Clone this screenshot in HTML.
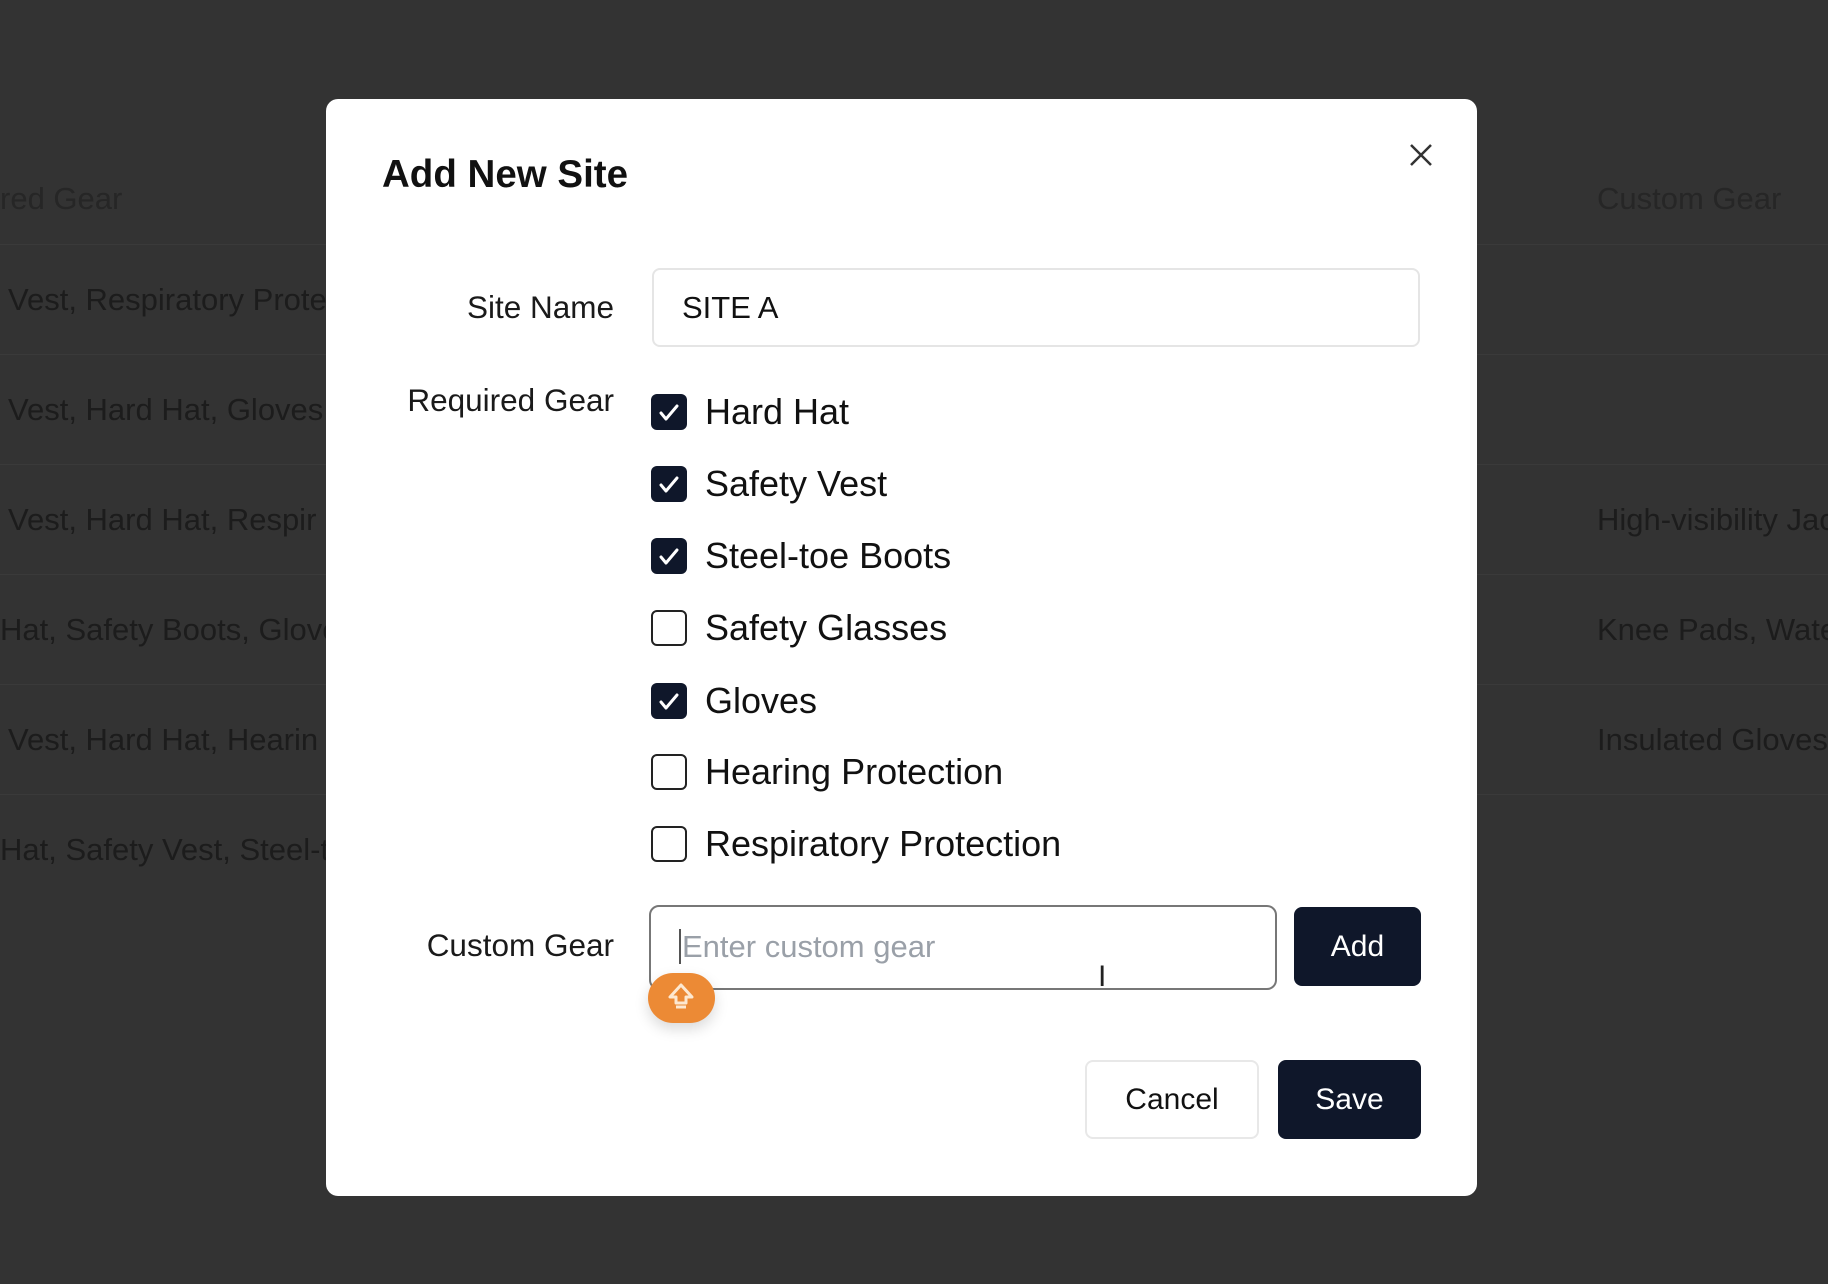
<!DOCTYPE html>
<html><head><meta charset="utf-8"><style>
*{box-sizing:border-box;margin:0;padding:0}
body{width:1828px;height:1284px;background:#333333;font-family:"Liberation Sans",sans-serif;position:relative;overflow:hidden}
.bg{position:absolute;color:#1c1c1c;font-size:31px;white-space:nowrap}
.line{position:absolute;height:1px;background:#3a3a3a;left:0;right:0}
.modal{position:absolute;left:326px;top:99px;width:1151px;height:1097px;background:#fff;border-radius:12px}
.a{position:absolute;white-space:nowrap}
.cb{position:absolute;left:651px;width:36px;height:36px;border-radius:6px}
.on{background:#0f172a}
.off{border:2.5px solid #222;background:#fff}
.gl{position:absolute;left:705px;font-size:36px;color:#111;white-space:nowrap}
.lb{position:absolute;left:0;width:614px;text-align:right;font-size:31.5px;color:#1a1a1a}
</style></head><body>
<div class="bg" style="left:0;top:181px;color:#262626">red Gear</div>
<div class="bg" style="left:1597px;top:181px;color:#262626">Custom Gear</div>
<div class="line" style="top:244px"></div>
<div class="bg" style="left:8px;top:282px">Vest, Respiratory Prote</div>
<div class="line" style="top:354px"></div>
<div class="bg" style="left:8px;top:392px">Vest, Hard Hat, Gloves</div>
<div class="line" style="top:464px"></div>
<div class="bg" style="left:8px;top:502px">Vest, Hard Hat, Respir</div>
<div class="bg" style="left:1597px;top:502px">High-visibility Jac</div>
<div class="line" style="top:574px"></div>
<div class="bg" style="left:0;top:612px">Hat, Safety Boots, Glove</div>
<div class="bg" style="left:1597px;top:612px">Knee Pads, Wate</div>
<div class="line" style="top:684px"></div>
<div class="bg" style="left:8px;top:722px">Vest, Hard Hat, Hearin</div>
<div class="bg" style="left:1597px;top:722px">Insulated Gloves</div>
<div class="line" style="top:794px"></div>
<div class="bg" style="left:0;top:832px">Hat, Safety Vest, Steel-t</div>

<div class="modal"></div>
<div class="a" style="left:382px;top:153px;font-size:38.5px;font-weight:bold;color:#111">Add New Site</div>
<svg class="a" style="left:1408px;top:142px" width="26" height="26" viewBox="0 0 26 26"><path d="M3 3L23 23M23 3L3 23" stroke="#333" stroke-width="2.5"/></svg>

<div class="lb" style="top:289px">Site Name</div>
<div class="a" style="left:652px;top:268px;width:768px;height:79px;border:2px solid #e5e5e5;border-radius:8px;font-size:31px;color:#111;padding-left:28px;line-height:75px">SITE A</div>

<div class="lb" style="top:382px">Required Gear</div>

<div class="cb on" style="top:394px"></div><div class="gl" style="top:391px">Hard Hat</div>
<div class="cb on" style="top:466px"></div><div class="gl" style="top:463px">Safety Vest</div>
<div class="cb on" style="top:538px"></div><div class="gl" style="top:535px">Steel-toe Boots</div>
<div class="cb off" style="top:610px"></div><div class="gl" style="top:607px">Safety Glasses</div>
<div class="cb on" style="top:683px"></div><div class="gl" style="top:680px">Gloves</div>
<div class="cb off" style="top:754px"></div><div class="gl" style="top:751px">Hearing Protection</div>
<div class="cb off" style="top:826px"></div><div class="gl" style="top:823px">Respiratory Protection</div>
<svg class="a" style="left:651px;top:394px" width="36" height="470" viewBox="0 0 36 470">
<g fill="none" stroke="#fff" stroke-width="3" stroke-linecap="round" stroke-linejoin="round">
<path d="M10 19l5 6 11-13"/><path d="M10 91l5 6 11-13"/><path d="M10 163l5 6 11-13"/><path d="M10 308l5 6 11-13"/>
</g></svg>

<div class="lb" style="top:927px">Custom Gear</div>
<div class="a" style="left:649px;top:905px;width:628px;height:85px;border:2.5px solid #777;border-radius:10px;font-size:31px;color:#9aa0a8;padding-left:28px;line-height:80px"><span style="border-left:2px solid #555;margin-right:1px"></span>Enter custom gear</div>
<div class="a" style="left:1294px;top:907px;width:127px;height:79px;background:#0f172a;border-radius:8px;color:#fff;font-size:30px;text-align:center;line-height:79px">Add</div>
<div class="a" style="left:1098px;top:960px;font-size:30px;color:#222">I</div>
<div class="a" style="left:648px;top:973px;width:67px;height:50px;background:#ec8a35;border-radius:25px;box-shadow:0 6px 14px rgba(0,0,0,.15)">
<svg width="67" height="50" viewBox="0 0 67 50"><path d="M33 12L22 24h6v6h10v-6h6z" fill="none" stroke="#fde8d0" stroke-width="3" stroke-linejoin="round"/><path d="M28 34h10" stroke="#fde8d0" stroke-width="3"/></svg></div>

<div class="a" style="left:1085px;top:1060px;width:174px;height:79px;border:2px solid #e8e8e8;border-radius:8px;font-size:30px;color:#111;text-align:center;line-height:75px">Cancel</div>
<div class="a" style="left:1278px;top:1060px;width:143px;height:79px;background:#0f172a;border-radius:8px;font-size:30px;color:#fff;text-align:center;line-height:79px">Save</div>
</body></html>
